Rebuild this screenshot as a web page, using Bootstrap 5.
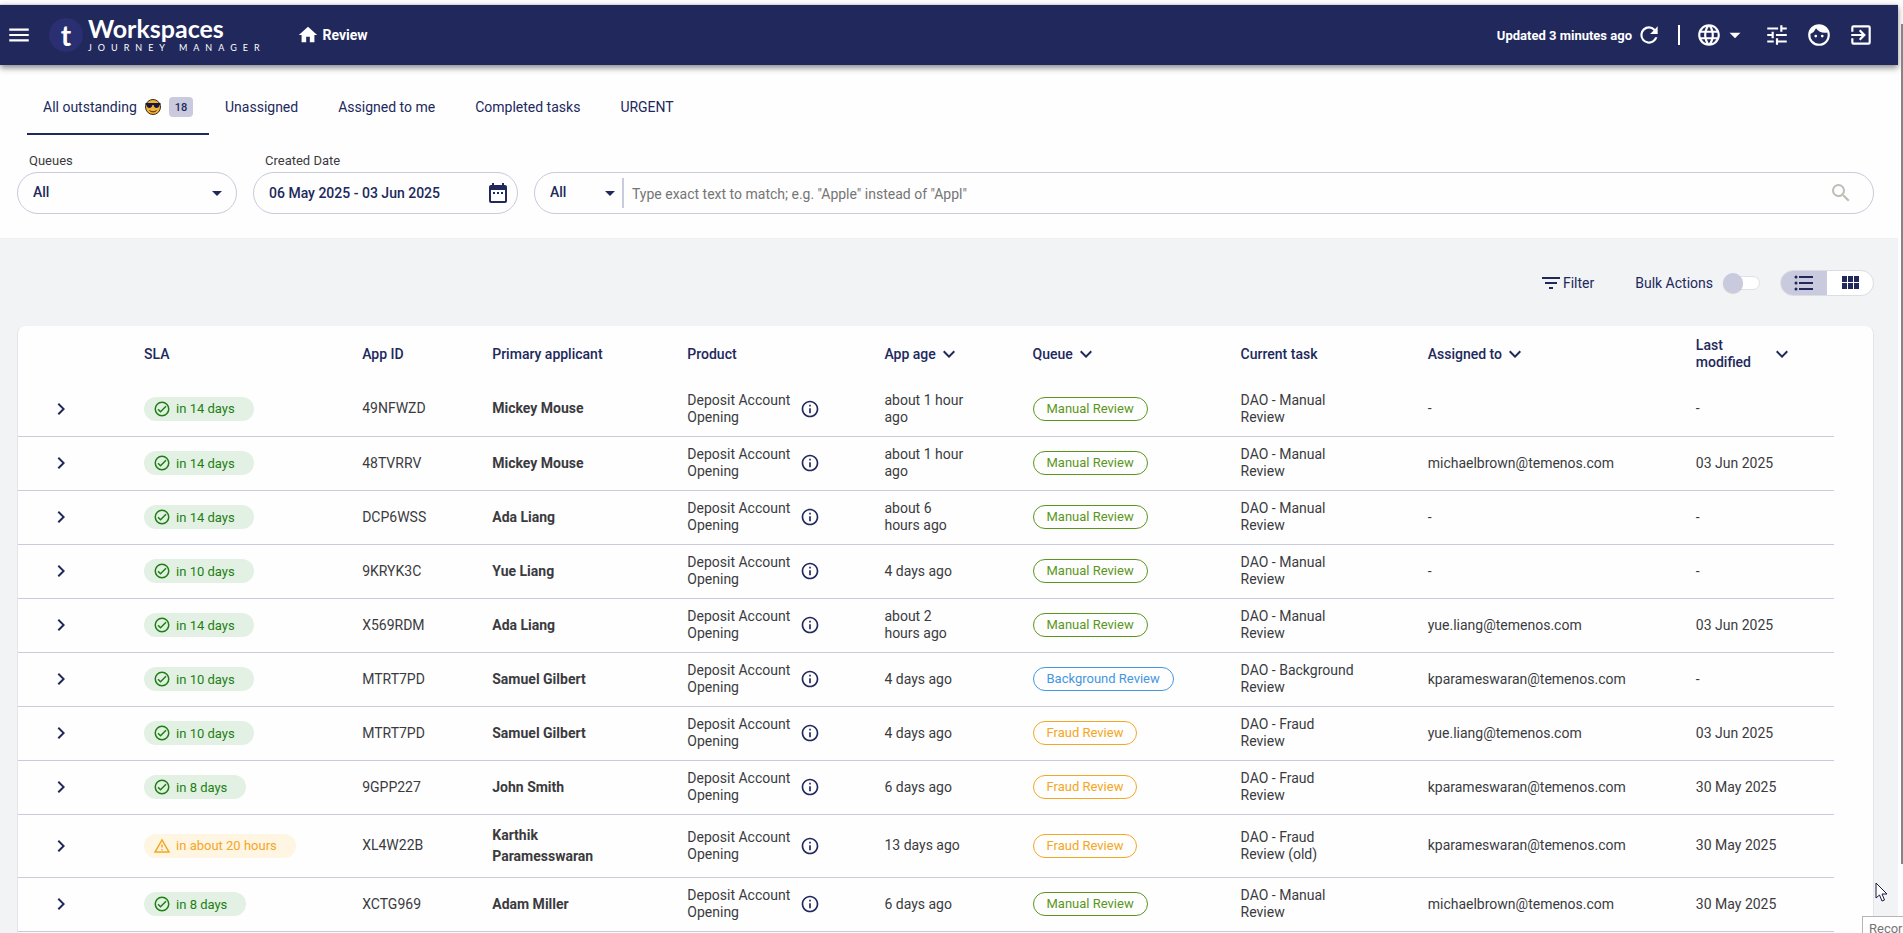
<!DOCTYPE html>
<html lang="en">
<head>
<meta charset="utf-8">
<meta name="viewport" content="width=device-width, initial-scale=1">
<title>Workspaces Journey Manager - Review</title>
<link href="https://cdn.jsdelivr.net/npm/bootstrap@5.3.0/dist/css/bootstrap.min.css" rel="stylesheet">
<style>
  :root { --navy: #21285c; --line: #c9cadd; --ink: #3b3b3f; --green: #1d7f12; --amber: #f5a623; }
  body { font-family: Roboto, "Liberation Sans", sans-serif; font-size: 14px; line-height: 17px; color: var(--ink); background: #fefefe; }
  .app { height: 100vh; padding: 4px 5px 0 0; overflow: hidden; }
  .ico { width: 24px; height: 24px; fill: currentColor; flex: none; display: block; }
  .ico-lg { width: 26px; height: 26px; }
  .ico-md { width: 22px; height: 22px; }
  .ico-sm { width: 18px; height: 18px; }
  .ico-info { width: 20px; height: 20px; }
  .plain { background: none; border: 0; padding: 0; color: inherit; display: flex; align-items: center; font: inherit; }
  .topbar { height: 61px; background: var(--navy); color: #fff; border-top: 1px solid #d8d8d8; box-shadow: 0 3px 6px rgba(0,0,0,.45); padding: 0 24px 0 6px; z-index: 2; position: relative; }
  .brand-mark { width: 34px; height: 34px; border-radius: 50%; background: #292f70; font: 700 28px/34px Lato, sans-serif; text-align: center; }
  .brand { gap: 5px; margin-left: 17px; }
  .brand-name { font: 700 25px/26px Lato, sans-serif; }
  .brand-sub { font: 400 9px/14px Lato, sans-serif; letter-spacing: 6px; }
  .home { margin-left: 31px; gap: 4px; }
  .vr-line { width: 2px; height: 20px; background: #fff; }
  .updated { font-weight: 700; font-size: 13px; }
  .panel { height: 174px; border-bottom: 1px solid #eff0f2; }
  .tabs { padding: 16px 0 0 27px; }
  .tabs .nav-link { color: var(--navy); padding: 0 16px; height: 54px; border-radius: 0; display: flex; align-items: center; border-bottom: 2px solid transparent; }
  .tabs .nav-link.active { border-color: var(--navy); width: 182px; }
  .tabs .nav-item:not(:first-child) { margin-right: 8px; }
  .count { background: var(--line); color: var(--navy); width: 24px; height: 20px; border-radius: 4px; font-size: 11px; line-height: 22px; text-align: center; font-weight: 500; margin-left: auto; }
  .cool { margin-left: 7px; }
  .filters { padding: 18px 24px 0 17px; gap: 16px; }
  .filters label { font-size: 13px; line-height: 16px; margin-left: 12px; margin-bottom: 3px; display: block; }
  .box { height: 42px; border: 1px solid var(--line); border-radius: 21px; position: relative; display: flex; align-items: center; width: 100%; }
  .box select, .box input { border: 0; background: none; outline: 0; appearance: none; color: var(--navy); font-weight: 500; width: 100%; height: 38px; padding: 0 15px 2px; }
  .box input { padding: 0 15px; }
  .box .over { position: absolute; right: 7px; pointer-events: none; color: var(--navy); }
  .box .w-scope .over { right: 0; }
  .w-queue { width: 220px; } .w-date { width: 265px; } .w-scope { width: 87px; flex: none; }
  .box .query { font-weight: 400; padding: 2px 8px 0; }
  .query::placeholder { color: #757575; opacity: 1; }
  .find { color: #bdbdb5; margin-right: 20px; }
  .split { width: 2px; height: 30px; background: var(--line); flex: none; }
  .board { background: #f1f3f5; padding: 31px 24px 0 17px; color: var(--navy); }
  .tools { height: 26px; margin-bottom: 30px; }
  .filter-btn { margin-right: 41px; }
  .switch { appearance: none; width: 37px; height: 14px; margin: 0 20px 0 10px; border-radius: 7px; background: #fff; border: 1px solid #e0e1e8; position: relative; }
  .switch::before { content: ""; position: absolute; left: -1px; top: -4px; width: 20px; height: 20px; border-radius: 50%; background: var(--line); box-shadow: 0 1px 1px rgba(0,0,0,.15); }
  .views { border: 1px solid #dcdde5; border-radius: 13px; overflow: hidden; width: 94px; height: 26px; background: #fff; }
  .views button { width: 50%; height: 100%; justify-content: center; }
  .views .on { background: var(--line); }
  .sheet { background: #fefefe; border: 1px solid #e4e5ea; border-top: 0; border-bottom: 0; border-radius: 8px 8px 0 0; padding-right: 39px; }
  .tasks { table-layout: fixed; width: 100%; border-collapse: collapse; color: var(--ink); }
  .tasks th { height: 56px; font-weight: 500; color: var(--navy); padding: 0; }
  .tasks td { height: 54px; padding: 0; border-bottom: 1px solid var(--line); }
  .tasks .who { font-weight: 700; line-height: 21px; padding: 10px 70px 10px 0; }
  .expand { margin-left: 31px; color: var(--navy); }
  .info-btn { color: var(--navy); }
  .sort { gap: 1px; } .last-mod { width: 73px; }
  .age { max-width: 84px; } .task { max-width: 120px; } .prod { width: 113px; flex: none; }
  .sla { display: inline-flex; align-items: center; height: 24px; border-radius: 12px; padding: 0 19px 0 9px; gap: 5px; font-size: 13px; background: #e3f1e4; color: var(--green); vertical-align: middle; }
  .sla.late { background: #fff5e3; color: var(--amber); }
  .tag { display: inline-block; height: 24px; line-height: 22px; border: 1px solid; border-radius: 12px; padding: 0 13px; font-size: 13px; vertical-align: middle; }
  .manual { color: #5b961c; } .fraud { color: var(--amber); } .background { color: #4596e0; }
  .rail { position: fixed; right: 0; top: 24px; width: 2px; height: 90vh; background: #858585; z-index: 3; }
  .hint { position: fixed; right: -60px; bottom: -4px; width: 101px; height: 21px; background: #fff; border: 1px solid #b5b5b5; color: #757575; font-size: 13px; padding: 3px 6px; white-space: nowrap; z-index: 4; }
  .pointer { position: fixed; right: 15px; bottom: 31px; width: 13px; height: 20px; z-index: 4; }
</style>
</head>
<body>
<svg class="d-none">
  <symbol id="caret" viewBox="0 0 24 24"><path d="M7 10l5 5 5-5z"/></symbol>
  <symbol id="down" viewBox="0 0 24 24"><path d="M7.4 8.6 12 13.2l4.600-4.600L18 10l-6 6-6-6z"/></symbol>
  <symbol id="right" viewBox="0 0 24 24"><path d="M8.600 16.600 13.200 12 8.600 7.400 10 6l6 6-6 6z"/></symbol>
  <symbol id="info" viewBox="0 0 24 24"><path d="M11 7h2v2h-2zm0 4h2v6h-2zm1-9C6.480 2 2 6.480 2 12s4.480 10 10 10 10-4.480 10-10S17.520 2 12 2zm0 18c-4.410 0-8-3.590-8-8s3.590-8 8-8 8 3.590 8 8-3.590 8-8 8z"/></symbol>
  <symbol id="ok" viewBox="0 0 24 24"><path d="M12 2a10 10 0 1 0 0 20 10 10 0 0 0 0-20zm0 18a8 8 0 1 1 0-16 8 8 0 0 1 0 16zm4.600-12.400L10 14.200l-2.600-2.600L6 13l4 4 8-8z"/></symbol>
  <symbol id="warn" viewBox="0 0 24 24"><path d="M12 6l7.530 13H4.470L12 6m0-4L1 21h22L12 2zm1 14h-2v2h2v-2zm0-6h-2v4h2v-4z"/></symbol>
</svg>
<div class="app d-flex flex-column">
  <header class="topbar d-flex align-items-center flex-shrink-0">
    <button class="plain" aria-label="Menu"><svg class="ico ico-lg" viewBox="0 0 24 24"><path d="M3 18h18v-2H3v2zm0-5h18v-2H3v2zm0-7v2h18V6H3z"/></svg></button>
    <div class="brand d-flex align-items-center">
      <div class="brand-mark">t</div>
      <div><div class="brand-name">Workspaces</div><div class="brand-sub">JOURNEY MANAGER</div></div>
    </div>
    <a href="#" class="home d-flex align-items-center text-white text-decoration-none fw-bold"><svg class="ico ico-md" viewBox="0 0 24 24"><path d="M10 20v-6h4v6h5v-8h3L12 3 2 12h3v8z"/></svg>Review</a>
    <div class="d-flex align-items-center ms-auto">
      <span class="updated me-1">Updated 3 minutes ago</span>
      <button class="plain" aria-label="Refresh"><svg class="ico ico-lg" viewBox="0 0 24 24"><path d="M17.650 6.350A7.960 7.960 0 0 0 12 4a8 8 0 1 0 7.730 10h-2.080A6 6 0 1 1 12 6c1.660 0 3.140.690 4.220 1.780L13 11h7V4l-2.350 2.350z"/></svg></button>
      <span class="vr-line mx-3"></span>
      <button class="plain" aria-label="Language"><svg class="ico ico-lg" viewBox="0 0 24 24"><path d="M11.990 2C6.470 2 2 6.480 2 12s4.470 10 9.990 10C17.520 22 22 17.520 22 12S17.520 2 11.990 2zm6.930 6h-2.950a15.650 15.650 0 0 0-1.380-3.560A8.030 8.030 0 0 1 18.920 8zM12 4.040c.830 1.200 1.480 2.530 1.910 3.960h-3.820c.430-1.430 1.080-2.760 1.910-3.960zM4.260 14a8.240 8.240 0 0 1 0-4h3.380a16.500 16.500 0 0 0 0 4H4.260zm.820 2h2.950c.320 1.250.780 2.450 1.380 3.560A7.990 7.990 0 0 1 5.080 16zm2.950-8H5.080a7.990 7.990 0 0 1 4.330-3.560A15.650 15.650 0 0 0 8.030 8zM12 19.960c-.830-1.200-1.480-2.530-1.910-3.960h3.820A13.900 13.900 0 0 1 12 19.960zM14.340 14H9.660a14.700 14.700 0 0 1 0-4h4.680a14.600 14.600 0 0 1 0 4zm.250 5.560c.600-1.110 1.060-2.310 1.380-3.560h2.950a8.030 8.030 0 0 1-4.330 3.560zM16.360 14a16.500 16.500 0 0 0 0-4h3.380a8.240 8.240 0 0 1 0 4h-3.380z"/></svg><svg class="ico ico-lg"><use href="#caret"/></svg></button>
      <button class="plain ms-3" aria-label="Preferences"><svg class="ico ico-lg" viewBox="0 0 24 24"><path d="M3 17v2h6v-2H3zM3 5v2h10V5H3zm10 16v-2h8v-2h-8v-2h-2v6h2zM7 9v2H3v2h4v2h2V9H7zm14 4v-2H11v2h10zm-6-4h2V7h4V5h-4V3h-2v6z"/></svg></button>
      <button class="plain ms-3" aria-label="Account"><svg class="ico ico-lg" viewBox="0 0 24 24"><path d="M9 11.750a1.250 1.250 0 1 0 0 2.500 1.250 1.250 0 0 0 0-2.500zm6 0a1.250 1.250 0 1 0 0 2.500 1.250 1.250 0 0 0 0-2.500zM12 2a10 10 0 1 0 0 20 10 10 0 0 0 0-20zm0 18a8 8 0 0 1-7.950-8.860 10.040 10.040 0 0 0 5.210-5.370A9.970 9.970 0 0 0 17.420 10c.780 0 1.530-.090 2.250-.260A8 8 0 0 1 12 20z"/></svg></button>
      <button class="plain ms-3" aria-label="Sign out"><svg class="ico ico-lg" viewBox="0 0 24 24"><path d="M10.090 15.590 11.500 17l5-5-5-5-1.410 1.410L12.670 11H3v2h9.670l-2.580 2.590zM19 3H5a2 2 0 0 0-2 2v4h2V5h14v14H5v-4H3v4a2 2 0 0 0 2 2h14a2 2 0 0 0 2-2V5a2 2 0 0 0-2-2z"/></svg></button>
    </div>
  </header>

  <section class="panel flex-shrink-0">
    <ul class="nav tabs">
      <li class="nav-item"><a class="nav-link active" href="#">All outstanding
        <svg class="cool" width="18" height="18" viewBox="0 0 18 18"><circle cx="9" cy="9" r="7.500" fill="#f2b233" stroke="#3a2a20"/><path d="M1.500 5h15v1.500l-1 .5c-.3 2-1.400 3-3 3S10 9 9.600 7H8.400C8 9 7 10 5.500 10S2.800 9 2.500 7l-1-.5z" fill="#17193c"/><path d="M5.500 12.500c2 1.800 5 1.800 7 0" fill="none" stroke="#3a2a20"/></svg>
        <span class="count">18</span></a></li>
      <li class="nav-item"><a class="nav-link" href="#">Unassigned</a></li>
      <li class="nav-item"><a class="nav-link" href="#">Assigned to me</a></li>
      <li class="nav-item"><a class="nav-link" href="#">Completed tasks</a></li>
      <li class="nav-item"><a class="nav-link" href="#">URGENT</a></li>
    </ul>
    <form class="filters d-flex align-items-end">
      <div class="w-queue"><label for="queues">Queues</label>
        <div class="box"><select id="queues"><option>All</option></select><svg class="ico over"><use href="#caret"/></svg></div></div>
      <div class="w-date"><label for="created">Created Date</label>
        <div class="box"><input id="created" value="06 May 2025 - 03 Jun 2025"><svg class="ico over" viewBox="0 0 24 24"><path d="M9 11H7v2h2v-2zm4 0h-2v2h2v-2zm4 0h-2v2h2v-2zm2-7h-1V2h-2v2H8V2H6v2H5a2 2 0 0 0-2 2v14a2 2 0 0 0 2 2h14a2 2 0 0 0 2-2V6a2 2 0 0 0-2-2zm0 16H5V9h14v11z"/></svg></div></div>
      <div class="box flex-fill w-auto">
        <div class="w-scope position-relative d-flex align-items-center"><select aria-label="Search field"><option>All</option></select><svg class="ico over"><use href="#caret"/></svg></div>
        <span class="split"></span>
        <input class="query" type="search" aria-label="Search" placeholder="Type exact text to match; e.g. &quot;Apple&quot; instead of &quot;Appl&quot;">
        <button type="button" class="plain find" aria-label="Search"><svg class="ico" viewBox="0 0 24 24"><path d="M15.500 14h-.790l-.280-.270A6.470 6.470 0 0 0 16 9.500 6.500 6.500 0 1 0 9.500 16c1.610 0 3.090-.590 4.230-1.570l.270.280v.790l5 4.990L20.490 19l-4.990-5zm-6 0a4.500 4.500 0 1 1 0-9 4.500 4.500 0 0 1 0 9z"/></svg></button>
      </div>
    </form>
  </section>

  <main class="board flex-grow-1 d-flex flex-column">
    <div class="tools d-flex align-items-center justify-content-end flex-shrink-0">
      <button class="plain filter-btn"><svg class="ico" viewBox="0 0 24 24"><path d="M10 18h4v-2h-4v2zM3 6v2h18V6H3zm3 7h12v-2H6v2z"/></svg>Filter</button>
      <label for="bulk">Bulk Actions</label>
      <input class="switch" type="checkbox" role="switch" id="bulk">
      <div class="views d-flex">
        <button class="plain on" aria-label="List view"><svg class="ico" viewBox="0 0 24 24"><path d="M4 10.500a1.500 1.500 0 1 0 0 3 1.500 1.500 0 0 0 0-3zm0-6a1.500 1.500 0 1 0 0 3 1.500 1.500 0 0 0 0-3zm0 12a1.500 1.500 0 1 0 0 3 1.500 1.500 0 0 0 0-3zM7 19h14v-2H7v2zm0-6h14v-2H7v2zm0-8v2h14V5H7z"/></svg></button>
        <button class="plain" aria-label="Grid view"><svg class="ico" viewBox="0 0 24 24"><path d="M4 11h5V5H4v6zm0 7h5v-6H4v6zm6 0h5v-6h-5v6zm6 0h5v-6h-5v6zm-6-7h5V5h-5v6zm6-6v6h5V5h-5z"/></svg></button>
      </div>
    </div>
    <div class="sheet flex-grow-1">
      <table class="tasks align-middle">
        <colgroup><col width="126"><col width="218"><col width="130"><col width="195"><col width="197"><col width="148"><col width="208"><col width="187"><col width="268"><col width="138"></colgroup>
        <thead><tr>
          <th aria-label="Expand"></th><th>SLA</th><th>App ID</th><th>Primary applicant</th><th>Product</th>
          <th><button class="plain sort">App age<svg class="ico"><use href="#down"/></svg></button></th>
          <th><button class="plain sort">Queue<svg class="ico"><use href="#down"/></svg></button></th>
          <th>Current task</th>
          <th><button class="plain sort">Assigned to<svg class="ico"><use href="#down"/></svg></button></th>
          <th><button class="plain sort text-start"><span class="last-mod">Last modified</span><svg class="ico"><use href="#down"/></svg></button></th>
        </tr></thead>
        <tbody id="rows"></tbody>
      </table>
    </div>
  </main>
</div>
<div class="rail"></div>
<div class="hint">Recording</div>
<svg class="pointer" viewBox="0 0 13 20"><path d="M1 1v15l3.500-3 2.500 6 2.500-1-2.500-6H12z" fill="#fff" stroke="#17193c"/></svg>
<script src="https://cdn.jsdelivr.net/npm/bootstrap@5.3.0/dist/js/bootstrap.bundle.min.js"></script>
<script>
  const kp = 'kparameswaran@temenos.com', mb = 'michaelbrown@temenos.com', yl = 'yue.liang@temenos.com';
  const tasks = [
    ['in 14 days', '49NFWZD', 'Mickey Mouse', 'about 1 hour ago', 'Manual', 'Manual Review', '-', '-'],
    ['in 14 days', '48TVRRV', 'Mickey Mouse', 'about 1 hour ago', 'Manual', 'Manual Review', mb, '03 Jun 2025'],
    ['in 14 days', 'DCP6WSS', 'Ada Liang', 'about 6 hours ago', 'Manual', 'Manual Review', '-', '-'],
    ['in 10 days', '9KRYK3C', 'Yue Liang', '4 days ago', 'Manual', 'Manual Review', '-', '-'],
    ['in 14 days', 'X569RDM', 'Ada Liang', 'about 2 hours ago', 'Manual', 'Manual Review', yl, '03 Jun 2025'],
    ['in 10 days', 'MTRT7PD', 'Samuel Gilbert', '4 days ago', 'Background', 'Background Review', kp, '-'],
    ['in 10 days', 'MTRT7PD', 'Samuel Gilbert', '4 days ago', 'Fraud', 'Fraud Review', yl, '03 Jun 2025'],
    ['in 8 days', '9GPP227', 'John Smith', '6 days ago', 'Fraud', 'Fraud Review', kp, '30 May 2025'],
    ['in about 20 hours', 'XL4W22B', 'Karthik Paramesswaran', '13 days ago', 'Fraud', 'Fraud Review (old)', kp, '30 May 2025'],
    ['in 8 days', 'XCTG969', 'Adam Miller', '6 days ago', 'Manual', 'Manual Review', mb, '30 May 2025']
  ];
  document.getElementById('rows').innerHTML = tasks.map(([sla, id, who, age, queue, task, to, mod]) => {
    const late = sla.includes('hours');
    return `<tr><td><button class="plain expand" aria-label="Expand"><svg class="ico"><use href="#right"/></svg></button></td>
      <td><span class="sla ${late ? 'late' : ''}"><svg class="ico ico-sm"><use href="#${late ? 'warn' : 'ok'}"/></svg>${sla}</span></td>
      <td>${id}</td><td class="who">${who}</td>
      <td><div class="d-flex align-items-center"><span class="prod">Deposit Account Opening</span><button class="plain info-btn" aria-label="Product details"><svg class="ico ico-info"><use href="#info"/></svg></button></div></td>
      <td><div class="age">${age}</div></td><td><span class="tag ${queue.toLowerCase()}">${queue} Review</span></td>
      <td><div class="task">DAO - ${task}</div></td><td>${to}</td><td>${mod}</td></tr>`;
  }).join('');
</script>
</body>
</html>
